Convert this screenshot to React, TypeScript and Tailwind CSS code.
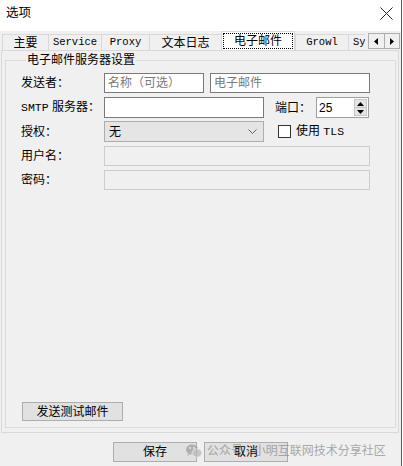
const sans = "font-['Liberation_Sans','Noto_Sans_CJK_SC',sans-serif]";
const mono = "font-['Liberation_Mono','Noto_Sans_CJK_SC',monospace]";

const tabs = [
  { label: "主要", w: "w-[46px]", latin: false },
  { label: "Service", w: "w-[53px]", latin: true },
  { label: "Proxy", w: "w-[48px]", latin: true },
  { label: "文本日志", w: "w-[72px]", latin: false },
  { label: "电子邮件", w: "w-[74px]", latin: false, active: true },
  { label: "Growl", w: "w-[53px]", latin: true },
];

function Tab({ label, w, latin, active }: { label: string; w: string; latin: boolean; active?: boolean }) {
  if (active) {
    return (
      <div className={`${w} h-[19px] shrink-0 bg-white border-x border-t border-[#d9d9d9] p-[1px]`}>
        <div className="h-full w-full border border-dotted border-black flex items-center justify-center text-[12px] leading-none text-black">
          {label}
        </div>
      </div>
    );
  }
  return (
    <div
      className={`${w} h-[16px] shrink-0 border-l border-t border-[#d9d9d9] flex items-center justify-center leading-none text-black ${
        latin ? `${mono} text-[10.5px]` : "text-[12px]"
      }`}
    >
      {label}
    </div>
  );
}

function Label({ children }: { children: React.ReactNode }) {
  return <div className="w-[83px] shrink-0 text-[12px] leading-none text-black">{children}</div>;
}

export default function App() {
  return (
    <div className={`w-[403px] h-[466px] bg-white ${sans} relative overflow-hidden`}>
      <div className="w-[402px] h-full bg-[#f0f0f0] border-r border-[#5b5b5b] flex flex-col">
        {/* title bar */}
        <div className="h-[31px] bg-white flex items-center justify-between pl-[6px] pr-[8px] pb-[5px]">
          <span className="text-[12.5px] leading-none text-black">选项</span>
          <svg width="13" height="13" viewBox="0 0 13 13" className="text-[#222]">
            <path d="M0.5 0.5 L12.5 12.5 M12.5 0.5 L0.5 12.5" stroke="currentColor" strokeWidth="1" fill="none" />
          </svg>
        </div>

        {/* tab strip */}
        <div className="h-[19px] flex items-end pl-[2px]">
          {tabs.map((t) => (
            <Tab key={t.label} {...t} />
          ))}
          <div className={`w-[17px] h-[16px] shrink-0 overflow-hidden border-l border-t border-[#d9d9d9] pl-[4px] flex items-center whitespace-nowrap ${mono} text-[10.5px] leading-none`}>
            System
          </div>
          <div className="ml-[3px] w-[32px] h-[16px] shrink-0 flex border border-[#adadad] bg-[#f0f0f0] self-start mt-[2px]">
            <div className="flex-1 flex items-center justify-center border-r border-[#adadad]">
              <svg width="4" height="7" viewBox="0 0 4 7">
                <path d="M4 0 L0 3.5 L4 7 Z" fill="#000" />
              </svg>
            </div>
            <div className="flex-1 flex items-center justify-center">
              <svg width="4" height="7" viewBox="0 0 4 7">
                <path d="M0 0 L4 3.5 L0 7 Z" fill="#000" />
              </svg>
            </div>
          </div>
        </div>

        {/* tab page */}
        <div className="ml-[1px] w-[398px] border border-[#d9d9d9] bg-[#f0f0f0] pt-[2px] pl-[3px] pr-[2px] pb-[4px]">
          <fieldset className="border border-[#dcdcdc] pl-[15px] pt-[6px] pb-[6px]">
            <legend className="ml-[5px] px-[1px] text-[12px] leading-[14px] text-black">电子邮件服务器设置</legend>

            <div className="h-[20px] flex items-center">
              <Label>发送者：</Label>
              <div className="w-[100px] h-[20px] border border-[#7a7a7a] bg-white pl-[3px] flex items-center text-[12px] leading-none text-[#7a7a7a]">
                名称（可选）
              </div>
              <div className="ml-[6px] w-[160px] h-[20px] border border-[#7a7a7a] bg-white pl-[3px] flex items-center text-[12px] leading-none text-[#7a7a7a]">
                电子邮件
              </div>
            </div>

            <div className="mt-[4px] h-[21px] flex items-center">
              <Label>
                <span className={`${mono} text-[11.5px]`}>SMTP</span> 服务器：
              </Label>
              <div className="w-[160px] h-[21px] border border-[#7a7a7a] bg-white" />
              <span className="ml-[11px] w-[41px] text-[12px] leading-none text-black">端口：</span>
              <div className="w-[53px] h-[21px] border border-[#a0a0a0] bg-white flex items-center justify-between pl-[2px] pr-[1px]">
                <span className="text-[12px] leading-none text-black">25</span>
                <div className="w-[13px] h-[17px] flex flex-col border border-[#c5c5c5] bg-[#e5e5e5]">
                  <div className="flex-1 flex items-center justify-center border-b border-[#c5c5c5]">
                    <svg width="7" height="4" viewBox="0 0 7 4">
                      <path d="M0 4 L3.5 0 L7 4 Z" fill="#000" />
                    </svg>
                  </div>
                  <div className="flex-1 flex items-center justify-center">
                    <svg width="7" height="4" viewBox="0 0 7 4">
                      <path d="M0 0 L3.5 4 L7 0 Z" fill="#000" />
                    </svg>
                  </div>
                </div>
              </div>
            </div>

            <div className="mt-[3px] h-[21px] flex items-center">
              <Label>授权：</Label>
              <div className="w-[160px] h-[21px] border border-[#adadad] bg-[#e5e5e5] flex items-center justify-between pl-[4px] pr-[6px]">
                <span className="text-[12px] leading-none text-black">无</span>
                <svg width="9" height="5" viewBox="0 0 9 5">
                  <path d="M0.5 0.5 L4.5 4.5 L8.5 0.5" stroke="#606060" strokeWidth="1" fill="none" />
                </svg>
              </div>
              <div className="ml-[14px] w-[13px] h-[13px] border border-[#333] bg-white" />
              <span className="ml-[5px] text-[12px] leading-none text-black">
                使用 <span className={`${mono} text-[11.5px]`}>TLS</span>
              </span>
            </div>

            <div className="mt-[4px] h-[20px] flex items-center">
              <Label>用户名：</Label>
              <div className="w-[266px] h-[20px] border border-[#cccccc] bg-[#f0f0f0]" />
            </div>

            <div className="mt-[4px] h-[20px] flex items-center">
              <Label>密码：</Label>
              <div className="w-[266px] h-[20px] border border-[#cccccc] bg-[#f0f0f0]" />
            </div>

            <button className="mt-[212px] ml-[1px] w-[101px] h-[19px] border border-[#adadad] bg-[#e1e1e1] flex items-center justify-center text-[12px] leading-none text-black">
              发送测试邮件
            </button>
          </fieldset>
        </div>

        {/* dialog buttons */}
        <div className="flex pl-[113px] pt-[9px] gap-[7px]">
          <button className="w-[84px] h-[20px] border border-[#adadad] bg-[#e1e1e1] flex items-center justify-center text-[12px] leading-none text-black">
            保存
          </button>
          <button className="w-[84px] h-[20px] border border-[#adadad] bg-[#e1e1e1] flex items-center justify-center text-[12px] leading-none text-black">
            取消
          </button>
        </div>
      </div>

      {/* watermark */}
      <div className="absolute left-[186px] top-[444px] flex items-center gap-[5px] opacity-70 pointer-events-none">
        <svg width="16" height="14" viewBox="0 0 16 14">
          <ellipse cx="6" cy="5.5" rx="6" ry="5" fill="#9a9a9a" />
          <path d="M2 9.5 L1.5 12 L4.5 10 Z" fill="#9a9a9a" />
          <ellipse cx="11" cy="9" rx="5" ry="4.2" fill="#b5b5b5" stroke="#f0f0f0" strokeWidth="0.8" />
          <circle cx="4" cy="4" r="0.9" fill="#f0f0f0" />
          <circle cx="8" cy="4" r="0.9" fill="#f0f0f0" />
        </svg>
        <span className="text-[12px] leading-none text-[#8a8a8a] whitespace-nowrap">公众号 · 小明互联网技术分享社区</span>
      </div>
    </div>
  );
}
